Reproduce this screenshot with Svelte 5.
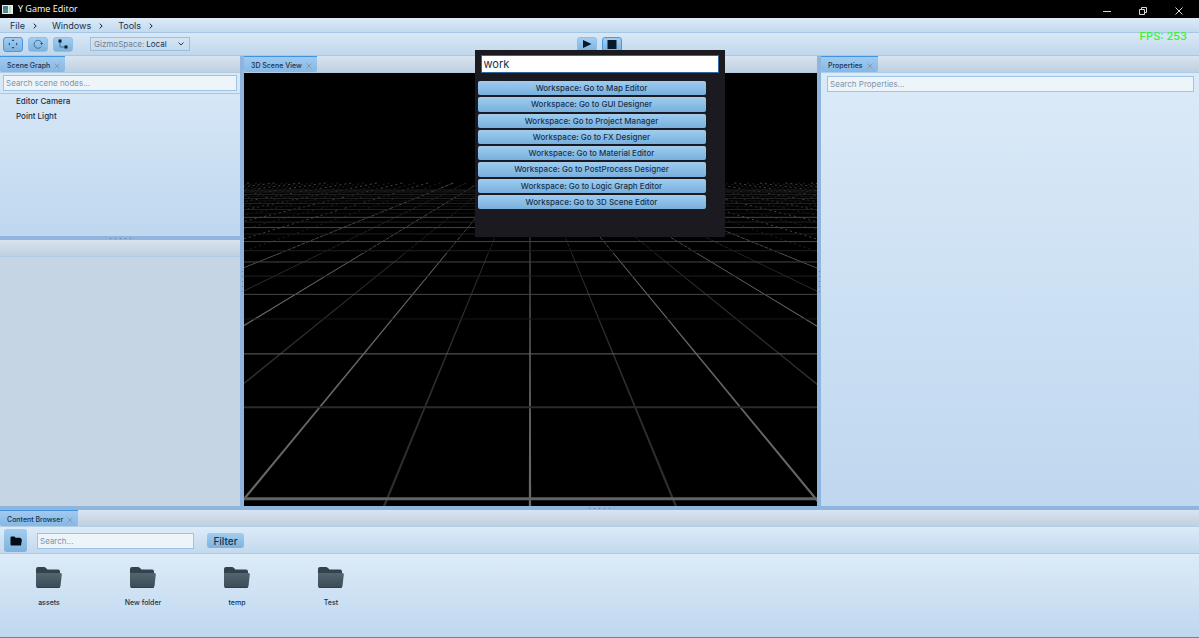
<script lang="ts">
  const menus = ['File', 'Windows', 'Tools'];
  const sceneNodes = ['Editor Camera', 'Point Light'];
  const folders = ['assets', 'New folder', 'temp', 'Test'];
  const commands = [
    'Map Editor',
    'GUI Designer',
    'Project Manager',
    'FX Designer',
    'Material Editor',
    'PostProcess Designer',
    'Logic Graph Editor',
    '3D Scene Editor'
  ];

  let query = $state('work');

  // perspective floor grid, in viewport units
  const width = 573;
  const height = 433;
  const cx = 286;
  const horizon = 79;
  const farEdge = 110;
  const nearEdge = 180;
  const spread = 0.412;

  const rows = Array.from({ length: 24 }, (_, n) => {
    const depth = 2.785 + n;
    let tone = n % 2 === 0 ? '#626262' : '#2b2b2b';
    if (n === 3) tone = '#171717';
    if (n > 3) tone = n % 2 === 0 ? '#454545' : '#202020';
    if (n > 12) tone = n % 2 === 0 ? '#222' : '#101010';
    return { y: horizon + 966 / depth, w: n === 0 ? 3 : n === 1 ? 2 : 1, tone };
  });

  const columns = Array.from({ length: 45 }, (_, k) => {
    const i = k - 22;
    const major = i % 2 === 0;
    const at = (y: number) => cx + i * spread * (y - horizon);
    const half = (y: number) => ((y - horizon) / 347) * Math.hypot(1, i * spread) + 0.15;
    const pts = [
      [at(nearEdge) - half(nearEdge), nearEdge],
      [at(nearEdge) + half(nearEdge), nearEdge],
      [at(height) + half(height), height],
      [at(height) - half(height), height]
    ];
    return {
      x1: at(farEdge),
      x2: at(nearEdge),
      shape: pts.map((p) => p.join(',')).join(' '),
      fill: major ? '#666' : '#2e2e2e',
      stroke: major ? '#484848' : '#222',
      dash: i === 0 ? 'none' : Math.abs(i) > 6 ? '2 3' : '4 1'
    };
  });
</script>

{#snippet tab(name: string)}
  <div class="tabs">
    <div class="tab">
      <span>{name}</span>
      <button class="close" aria-label={`Close ${name}`}>
        <svg viewBox="0 0 6 6"><path d="M.5.5l5 5M5.5.5l-5 5" /></svg>
      </button>
    </div>
  </div>
{/snippet}

{#snippet grip()}
  <i></i><i></i><i></i><i></i><i></i>
{/snippet}

<div class="window">
  <header class="titlebar">
    <svg class="logo" viewBox="0 0 11 9">
      <rect width="11" height="9" fill="#e6eeec" />
      <rect x="1" y="1" width="5" height="7" fill="#4f8f83" />
      <rect x="1" y="1" width="5" height="3" fill="#4b7895" />
      <rect x="7" y="1" width="2" height="7" fill="#b9d9c6" />
    </svg>
    <h1>Y Game Editor</h1>
    <div class="controls">
      <button aria-label="Minimize"><svg viewBox="0 0 8 8"><path d="M0 4.5h8" /></svg></button>
      <button aria-label="Restore">
        <svg viewBox="0 0 8 8"><path d="M.5 2.5h5v5h-5zM2.5 2V.5h5v5H6" /></svg>
      </button>
      <button aria-label="Close"><svg viewBox="0 0 8 8"><path d="M.5.5l7 7M7.5.5l-7 7" /></svg></button>
    </div>
  </header>

  <nav class="menubar">
    {#each menus as menu}
      <button>
        {menu}
        <svg viewBox="0 0 4 6"><path d="M.7.7L3.2 3 .7 5.3" /></svg>
      </button>
    {/each}
  </nav>

  <div class="toolbar">
    <div class="tools">
      <button class="tool active" aria-label="Move">
        <svg viewBox="0 0 10 10">
          <path d="M5 .3L6.5 2h-3zM5 9.7L6.5 8h-3zM.3 5L2 3.5v3zM9.7 5L8 3.5v3z" fill="#27517c" />
        </svg>
      </button>
      <button class="tool" aria-label="Rotate">
        <svg viewBox="0 0 10 10">
          <path d="M8.4 7.4A4 4 0 1 1 8.8 4" fill="none" stroke="#3f6f9f" />
          <path d="M7 4h3L8.7 6z" fill="#27517c" />
        </svg>
      </button>
      <button class="tool" aria-label="Scale">
        <svg viewBox="0 0 10 10">
          <path d="M2 2v6h6" fill="none" stroke="#33597f" stroke-width=".8" />
          <path d="M.5.5h3v3h-3zM6.5 6.5h3v3h-3z" fill="#06182c" />
        </svg>
      </button>
      <div class="gizmo">
        <label for="gizmo">GizmoSpace:</label>
        <select id="gizmo">
          <option>Local</option>
          <option>World</option>
        </select>
        <svg viewBox="0 0 6 4"><path d="M.5.5L3 3 5.5.5" /></svg>
      </div>
    </div>
    <div class="playback">
      <button class="tool" aria-label="Play">
        <svg viewBox="0 0 10 10"><path d="M1 1l8.5 4L1 9z" fill="#06182c" /></svg>
      </button>
      <button class="tool active" aria-label="Stop">
        <svg viewBox="0 0 10 10"><path d="M.5 1h9v9h-9z" fill="#06182c" /></svg>
      </button>
    </div>
    <div class="fps">FPS: 253</div>
  </div>

  <main>
    <div class="left">
      <section class="panel">
        {@render tab('Scene Graph')}
        <div class="search">
          <input type="text" placeholder="Search scene nodes..." aria-label="Search scene nodes" />
        </div>
        <ul class="tree">
          {#each sceneNodes as node}
            <li>{node}</li>
          {/each}
        </ul>
      </section>
      <div class="split">{@render grip()}</div>
      <section class="panel empty">
        <div class="tabs"></div>
      </section>
    </div>

    <div class="split vertical">{@render grip()}</div>

    <section class="panel">
      {@render tab('3D Scene View')}
      <div class="viewport">
        <svg viewBox={`0 0 ${width} ${height}`} preserveAspectRatio="xMidYMid slice">
          {#each columns as c}
            <line x1={c.x1} y1={farEdge} x2={c.x2} y2={nearEdge} stroke={c.stroke} stroke-dasharray={c.dash} />
            <polygon points={c.shape} fill={c.fill} />
          {/each}
          {#each rows as r}
            <line x1="0" y1={r.y} x2={width} y2={r.y} stroke={r.tone} stroke-width={r.w} />
          {/each}
        </svg>
      </div>
    </section>

    <div class="split vertical">{@render grip()}</div>

    <section class="panel">
      {@render tab('Properties')}
      <div class="properties">
        <input type="text" placeholder="Search Properties..." aria-label="Search Properties" />
      </div>
    </section>
  </main>

  <div class="split">{@render grip()}</div>

  <section class="panel">
    {@render tab('Content Browser')}
    <div class="browser-bar">
      <button class="root" aria-label="Root folder">
        <svg viewBox="0 0 12 10">
          <path d="M.5 1.5Q.5.5 1.5.5h3l1 1.2h4.5q1 0 1 1v.6h1L11 9.5H1.5Q.5 9.5.5 8.5z" fill="#020c18" />
        </svg>
      </button>
      <input type="text" placeholder="Search..." aria-label="Search content" />
      <button class="filter">Filter</button>
    </div>
    <div class="files">
      {#each folders as folder}
        <button class="file">
          <svg viewBox="0 0 26 21">
            <defs>
              <linearGradient id="front" x2="0" y2="1">
                <stop stop-color="#53656f" />
                <stop offset="1" stop-color="#3b4b57" />
              </linearGradient>
            </defs>
            <path d="M0 2Q0 0 2 0h6q1 0 2 1l1.5 1.5H22q2 0 2 2V18H0z" fill="#33434e" />
            <path d="M0 6h24.5q1.5 0 1.3 1.5L24.5 19q-.3 2-2 2H2q-2 0-2-2z" fill="url(#front)" />
            <path d="M1 20.5h22.5" stroke="#2f3f4a" />
          </svg>
          <span>{folder}</span>
        </button>
      {/each}
    </div>
  </section>

  <div class="palette" role="dialog" aria-label="Command palette">
    <input type="text" bind:value={query} aria-label="Command" />
    <div class="results">
      {#each commands as command}
        <button>Workspace: Go to {command}</button>
      {/each}
    </div>
  </div>
</div>

<style>
  :global(body) {
    background: #000;
  }

  .window {
    position: relative;
    display: flex;
    flex-direction: column;
    min-height: 100vh;
    box-sizing: border-box;
    border-bottom: 1px solid #6f8296;
    font-family: Inter, sans-serif;
    font-size: 8px;
    line-height: 10px;
    color: #16324f;
  }

  button,
  input,
  select {
    box-sizing: border-box;
    margin: 0;
    padding: 0;
    border: 0;
    background: none;
    font: inherit;
    color: inherit;
  }

  svg {
    display: block;
  }

  input {
    height: 16px;
    padding: 0 2px;
    border: 1px solid #9cc4e8;
    background: #edf5fb;
  }

  input::placeholder {
    color: #7e94aa;
    opacity: 1;
  }

  .titlebar {
    display: flex;
    align-items: center;
    height: 18px;
    padding: 0 2px;
    background: #000;
    color: #fff;
  }

  .logo {
    width: 11px;
    height: 9px;
  }

  h1 {
    flex: 1;
    margin: 0 0 0 5px;
    font: 400 9px/12px 'Open Sans', sans-serif;
  }

  .controls {
    display: flex;
    align-self: stretch;
  }

  .controls button {
    display: grid;
    place-items: end center;
    width: 36px;
    padding-bottom: 3px;
  }

  .controls svg {
    width: 8px;
    height: 8px;
    fill: none;
    stroke: #d8d8d8;
  }

  .menubar {
    display: flex;
    gap: 15px;
    box-sizing: border-box;
    height: 15px;
    padding-left: 10px;
    border-bottom: 1px solid #a5c6e4;
    background: linear-gradient(#dcebf8, #c3d9ee);
    font-size: 9px;
  }

  .menubar button {
    display: flex;
    align-items: center;
    gap: 8px;
    padding-top: 2px;
  }

  .menubar svg {
    width: 4px;
    height: 6px;
    fill: none;
    stroke: #10263c;
  }

  .toolbar {
    display: grid;
    grid-template-columns: 1fr auto 1fr;
    align-items: center;
    box-sizing: border-box;
    height: 23px;
    padding: 0 4px 0 3px;
    border-bottom: 1px solid #aac8e2;
    background: linear-gradient(#d9e8f6, #c0d7ec);
  }

  .tools,
  .playback {
    display: flex;
    align-items: center;
    gap: 5px;
  }

  .tool {
    display: grid;
    place-items: center;
    width: 20px;
    height: 15px;
    border: 1px solid #8fc0e8;
    border-radius: 3px;
    background: linear-gradient(#a3cdf0, #7db2dd);
  }

  .tool.active {
    border-color: #4a98e0;
  }

  .tool svg {
    width: 10px;
    height: 10px;
  }

  .gizmo {
    display: flex;
    align-items: center;
    gap: 2px;
    box-sizing: border-box;
    width: 100px;
    height: 14px;
    margin-left: 12px;
    padding: 0 5px 0 3px;
    border: 1px solid #9fbedb;
  }

  .gizmo label {
    color: #6d8197;
  }

  .gizmo select {
    flex: 1;
    min-width: 0;
    appearance: none;
  }

  .gizmo svg {
    width: 6px;
    height: 4px;
    fill: none;
    stroke: #1d3a58;
  }

  .fps {
    align-self: start;
    padding-right: 8px;
    font-size: 11px;
    font-weight: 500;
    line-height: 6px;
    text-align: right;
    color: #35f03c;
  }

  main {
    flex: 1;
    display: grid;
    grid-template-columns: 240fr 4px 573fr 4px 378fr;
  }

  .left {
    display: grid;
    grid-template-rows: 180fr 4px 266fr;
  }

  .panel {
    display: flex;
    flex-direction: column;
    min-width: 0;
    background: linear-gradient(#dcebf8, #bfd7ef);
  }

  .panel.empty {
    background: #c6d5e4;
  }

  .tabs {
    display: flex;
    box-sizing: border-box;
    height: 17px;
    border-bottom: 1px solid #b0cde4;
    background: linear-gradient(#d8e4f0, #bfd0e0);
  }

  .tab {
    display: flex;
    align-items: center;
    gap: 4px;
    padding: 2px 5px 0 7px;
    border-top: 1px solid #3f93e0;
    border-radius: 0 0 2px 2px;
    background: linear-gradient(#a0caf0, #86b8e6);
    font-size: 7px;
    font-weight: 500;
  }

  .close svg {
    width: 6px;
    height: 6px;
    fill: none;
    stroke: #8d98a5;
  }

  .search {
    display: flex;
    padding: 2px 3px;
    border-bottom: 1px solid #a9c8e2;
  }

  .search input,
  .properties input {
    flex: 1;
    min-width: 0;
  }

  .tree {
    margin: 0;
    padding: 0 16px;
    list-style: none;
    font-weight: 500;
  }

  .tree li {
    height: 15px;
    line-height: 15px;
  }

  .split {
    display: flex;
    justify-content: center;
    align-items: center;
    gap: 4px;
    height: 4px;
    background: #8fb5de;
  }

  .split.vertical {
    flex-direction: column;
    height: auto;
  }

  .split i {
    width: 1px;
    height: 1px;
    background: #66809c;
  }

  .viewport {
    flex: 1;
    position: relative;
    background: #000;
  }

  .viewport svg {
    position: absolute;
    width: 100%;
    height: 100%;
  }

  .properties {
    display: flex;
    padding: 3px 5px 3px 6px;
  }

  .browser-bar {
    display: flex;
    align-items: center;
    box-sizing: border-box;
    height: 27px;
    padding: 1px 0 0 4px;
    border-bottom: 1px solid #adcae3;
    background: linear-gradient(#dcebf8, #c3d9ee);
  }

  .root {
    display: grid;
    place-items: center;
    width: 23px;
    height: 23px;
    border-radius: 3px;
    background: linear-gradient(#a3cdf0, #7db2dd);
  }

  .root svg {
    width: 12px;
    height: 10px;
  }

  .browser-bar input {
    width: 157px;
    margin-left: 10px;
  }

  .filter {
    width: 37px;
    height: 15px;
    margin-left: 13px;
    border-radius: 3px;
    background: linear-gradient(#a3cdf0, #7db2dd);
    font-size: 10px;
    font-weight: 500;
  }

  .files {
    display: flex;
    min-height: 83px;
    box-sizing: border-box;
    padding: 13px 2px 0;
    background: linear-gradient(#dcebf8, #bfd7ef);
  }

  .file {
    display: flex;
    flex-direction: column;
    align-items: center;
    gap: 10px;
    width: 94px;
    font-size: 7px;
    font-weight: 500;
  }

  .file svg {
    width: 26px;
    height: 21px;
  }

  .palette {
    position: absolute;
    top: 50px;
    right: 0;
    left: 0;
    box-sizing: border-box;
    width: 250px;
    min-height: 187px;
    margin: 0 auto;
    padding: 5px 6px 28px 3px;
    background: #1b1a20;
  }

  .palette input {
    width: 238px;
    height: 18px;
    margin-left: 3px;
    border-color: #34689b;
    background: #fff;
    font-size: 11px;
  }

  .results {
    display: grid;
    gap: 2px;
    width: 228px;
    height: 128px;
    margin-top: 8px;
  }

  .results button {
    border-radius: 2px;
    background: linear-gradient(#a0ccf0, #78b0dc);
    font-weight: 500;
  }
</style>
